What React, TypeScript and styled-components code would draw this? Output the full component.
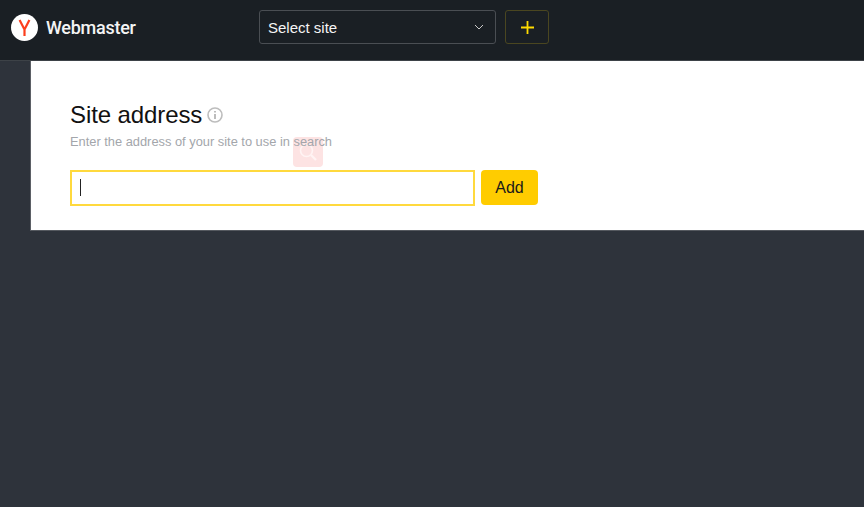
import React from "react";
import styled, { createGlobalStyle } from "styled-components";

const GlobalStyle = createGlobalStyle`
  html, body {
    margin: 0;
    padding: 0;
    height: 100%;
    background-color: #2e333b;
    overflow: hidden;
  }
`;

const Page = styled.div`
  width: 864px;
  height: 507px;
  display: flex;
  flex-direction: column;
  background-color: #2e333b;
  font-family: "Liberation Sans", Arial, sans-serif;
`;

const Header = styled.header`
  box-sizing: border-box;
  height: 61px;
  display: flex;
  align-items: flex-start;
  background-color: #1a1f24;
  border-bottom: 1px solid #3d4247;
`;

const Brand = styled.div`
  width: 259px;
  height: 54px;
  padding-left: 11px;
  box-sizing: border-box;
  display: flex;
  align-items: center;
  column-gap: 8px;
`;

const BrandName = styled.span`
  font-family: Roboto, sans-serif;
  font-size: 18px;
  font-weight: 500;
  letter-spacing: -0.25px;
  color: #f4f4f4;
`;

const Controls = styled.div`
  display: flex;
  column-gap: 9px;
  padding-top: 10px;
`;

const SiteSelect = styled.div`
  box-sizing: border-box;
  width: 237px;
  height: 34px;
  padding: 0 11px 0 8px;
  display: flex;
  align-items: center;
  justify-content: space-between;
  border: 1px solid #4a4e53;
  border-radius: 3px;
  color: #f5f5f5;
  font-size: 15px;
`;

const AddSiteButton = styled.button`
  box-sizing: border-box;
  width: 44px;
  height: 34px;
  padding: 0;
  display: flex;
  align-items: center;
  justify-content: center;
  background: transparent;
  border: 1px solid #4a4620;
  border-radius: 3px;
`;

const Card = styled.main`
  box-sizing: border-box;
  position: relative;
  margin-left: 30px;
  height: 170px;
  padding: 39px 0 0 39px;
  background-color: #ffffff;
  border-left: 1px solid #5b5f65;
  border-bottom: 1px solid #55595f;
`;

const TitleRow = styled.div`
  display: flex;
  align-items: center;
  column-gap: 5px;
  height: 30px;
`;

const Title = styled.h1`
  margin: 0;
  font-size: 24px;
  font-weight: 400;
  letter-spacing: -0.1px;
  color: #111111;
`;

const Hint = styled.p`
  position: relative;
  margin: 4px 0 0;
  font-size: 12.85px;
  line-height: 16px;
  color: #a3a6ab;
`;

const FormRow = styled.div`
  display: flex;
  column-gap: 6px;
  margin-top: 20px;
`;

const AddressField = styled.div`
  box-sizing: border-box;
  position: relative;
  width: 405px;
  height: 36px;
  border: 2px solid #ffd93d;
  background-color: #ffffff;
`;

const Caret = styled.span`
  position: absolute;
  left: 8px;
  top: 7px;
  width: 1px;
  height: 17px;
  background-color: #222222;
`;

const AddButton = styled.button`
  box-sizing: border-box;
  width: 57px;
  height: 35px;
  padding: 0;
  border: none;
  border-radius: 4px;
  background-color: #ffcc00;
  color: #1a1a1a;
  font-family: "Liberation Sans", Arial, sans-serif;
  font-size: 16px;
`;

const SearchBadge = styled.div`
  position: absolute;
  left: 262px;
  top: 76px;
  width: 30px;
  height: 30px;
  display: flex;
  align-items: center;
  justify-content: center;
  border-radius: 4px;
  background-color: #fde3e3;
`;

const YandexLogo = () => (
  <svg width="27" height="27" viewBox="0 0 27 27">
    <circle cx="13.5" cy="13.5" r="13.5" fill="#ffffff" />
    <path
      d="M8.6 6 L13.5 15.5 L13.5 22 M18.4 6 L13.5 15.5"
      fill="none"
      stroke="#fc3f1d"
      strokeWidth="2.2"
    />
  </svg>
);

const Chevron = () => (
  <svg width="10" height="6" viewBox="0 0 10 6">
    <path d="M1 1 L5 5 L9 1" fill="none" stroke="#c8c8c8" strokeWidth="1" />
  </svg>
);

const PlusIcon = () => (
  <svg width="13" height="13" viewBox="0 0 13 13">
    <path d="M6.5 0 V13 M0 6.5 H13" stroke="#ffdb00" strokeWidth="1.8" />
  </svg>
);

const InfoIcon = () => (
  <svg width="16" height="16" viewBox="0 0 16 16">
    <circle cx="8" cy="8" r="7" fill="none" stroke="#bdbdbd" strokeWidth="1.6" />
    <path d="M8 7 V12 M8 4 V5.6" stroke="#b5b5b5" strokeWidth="1.8" />
  </svg>
);

const SearchGlyph = () => (
  <svg width="22" height="22" viewBox="0 0 22 22">
    <circle cx="9.5" cy="9.5" r="6" fill="none" stroke="#fff4f4" strokeWidth="1.6" />
    <path d="M14 14 L19 19" stroke="#fff4f4" strokeWidth="2.4" />
  </svg>
);

const App = () => {
  return (
    <Page>
      <GlobalStyle />
      <Header>
        <Brand>
          <YandexLogo />
          <BrandName>Webmaster</BrandName>
        </Brand>
        <Controls>
          <SiteSelect>
            Select site
            <Chevron />
          </SiteSelect>
          <AddSiteButton>
            <PlusIcon />
          </AddSiteButton>
        </Controls>
      </Header>
      <Card>
        <SearchBadge>
          <SearchGlyph />
        </SearchBadge>
        <TitleRow>
          <Title>Site address</Title>
          <InfoIcon />
        </TitleRow>
        <Hint>Enter the address of your site to use in search</Hint>
        <FormRow>
          <AddressField>
            <Caret />
          </AddressField>
          <AddButton>Add</AddButton>
        </FormRow>
      </Card>
    </Page>
  );
};

export default App;
